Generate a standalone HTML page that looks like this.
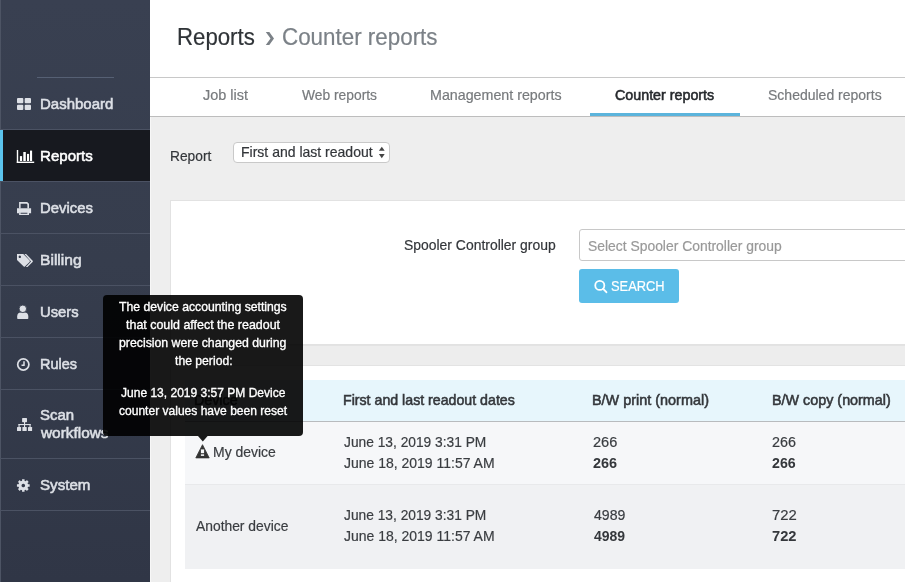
<!DOCTYPE html>
<html><head><meta charset="utf-8">
<style>
*{box-sizing:border-box;margin:0;padding:0}
html,body{width:905px;height:582px;overflow:hidden;background:#eeeeee;font-family:"Liberation Sans",sans-serif;}
#wrap{position:absolute;left:0;top:0;width:905px;height:582px;background:#eeeeee;will-change:transform;overflow:hidden}
.tx{position:absolute;white-space:nowrap;line-height:1;transform-origin:0 0}
.bx{position:absolute}
#side{position:absolute;left:0;top:0;width:150px;height:582px;background:linear-gradient(#394051,#363d4d 45%,#303646);}
.sep{position:absolute;left:0;width:150px;height:1px;background:#4b5263}
.active{position:absolute;left:0;top:130px;width:150px;height:51px;background:#17191f}
.activebar{position:absolute;left:0;top:130px;width:3px;height:51px;background:#5bc3ec}
.ico{position:absolute}
</style></head><body><div id="wrap">
<div id="side"></div>
<div class="bx" style="left:0;top:0;width:1px;height:582px;background:#4d5464"></div>
<div class="bx" style="left:37px;top:77px;width:77px;height:1px;background:#566074"></div>
<div class="active"></div>
<div class="activebar"></div>
<div class="sep" style="top:129px"></div>
<div class="sep" style="top:181px"></div>
<div class="sep" style="top:233px"></div>
<div class="sep" style="top:285px"></div>
<div class="sep" style="top:337px"></div>
<div class="sep" style="top:389px"></div>
<div class="sep" style="top:458px"></div>
<div class="sep" style="top:510px"></div>

<!-- sidebar icons -->
<svg class="ico" style="left:0;top:0" width="40" height="582" viewBox="0 0 40 582">
 <g fill="#dde0e6">
  <rect x="17" y="98" width="6.3" height="5.2" rx="1"/><rect x="24.7" y="98" width="6.3" height="5.2" rx="1"/>
  <rect x="17" y="104.8" width="6.3" height="5.2" rx="1"/><rect x="24.7" y="104.8" width="6.3" height="5.2" rx="1"/>
 </g>
 <g fill="#ffffff">
  <rect x="16.8" y="150" width="1.4" height="13"/><rect x="16.8" y="161.6" width="17.4" height="1.4"/>
  <rect x="19.9" y="156.1" width="2.2" height="4.9"/><rect x="23.3" y="152" width="2.5" height="9"/>
  <rect x="27" y="153.9" width="2.1" height="7.1"/><rect x="30" y="150.6" width="2.1" height="10.4"/>
 </g>
 <g fill="#dde0e6">
  <path d="M19.1,202 H27.2 L29,203.8 V208.4 H27.4 V204.6 L26.6,203.7 H20.6 V208.4 H19.1 Z"/>
  <path d="M17,208.3 H31.1 V213.2 H29 V212 H19.1 V213.2 H17 Z"/>
  <path d="M19.1,212 H29 V215 H19.1 Z M20.6,212.7 V213.8 H27.4 V212.7 Z" fill-rule="evenodd"/>
 </g>
 <g fill="#dde0e6">
  <path d="M17,254.1 H23.3 L29.7,260.6 Q30.2,261.3 29.6,262 L24.9,266.6 Q24.3,267.1 23.7,266.5 L17,259.9 Z M19.8,255.6 A1.2,1.2 0 1 0 19.81,255.6 Z" fill-rule="evenodd"/>
  <path d="M24.4,254.1 H26.1 L32.7,260.7 Q33.2,261.3 32.6,261.9 L27.5,267 H25.8 L31,261.6 Z"/>
 </g>
 <g fill="#dde0e6">
  <path d="M17.2,318.3 Q17.2,319 17.9,319 H27.6 Q28.3,319 28.3,318.3 V316.2 Q28.3,312.4 24.6,312.4 H20.9 Q17.2,312.4 17.2,316.2 Z"/>
  <circle cx="22.8" cy="308.8" r="3.75" stroke="#363d4d" stroke-width="0.9"/>
 </g>
 <g fill="none" stroke="#dde0e6">
  <circle cx="23.3" cy="364.5" r="5.6" stroke-width="1.7"/>
  <path d="M24,361.3 V365.2 H21.5" stroke-width="1.5"/>
 </g>
 <g fill="#dde0e6">
  <rect x="22.1" y="418.1" width="4.9" height="4.1" rx="0.6"/>
  <rect x="24" y="422" width="1.1" height="5"/>
  <rect x="18.5" y="424" width="12.1" height="1.1"/>
  <rect x="18.5" y="424" width="1.1" height="3"/><rect x="29.5" y="424" width="1.1" height="3"/>
  <rect x="17" y="427" width="4.1" height="4" rx="0.5"/><rect x="22.4" y="427" width="4.3" height="4" rx="0.5"/><rect x="28" y="427" width="4.1" height="4" rx="0.5"/>
 </g>
 <g fill="#dde0e6">
  <path fill-rule="evenodd" d="M29.67,484.21 L29.67,486.79 L28.06,486.68 L27.50,488.03 L28.72,489.09 L26.89,490.92 L25.83,489.70 L24.48,490.26 L24.59,491.87 L22.01,491.87 L22.12,490.26 L20.77,489.70 L19.71,490.92 L17.88,489.09 L19.10,488.03 L18.54,486.68 L16.93,486.79 L16.93,484.21 L18.54,484.32 L19.10,482.97 L17.88,481.91 L19.71,480.08 L20.77,481.30 L22.12,480.74 L22.01,479.13 L24.59,479.13 L24.48,480.74 L25.83,481.30 L26.89,480.08 L28.72,481.91 L27.50,482.97 L28.06,484.32 Z M25.10,485.50 A1.80,1.80 0 1 0 25.10,485.51 Z"/>
 </g>
</svg>

<!-- header -->
<div class="bx" style="left:150px;top:0;width:755px;height:117px;background:#fff"></div>
<div class="bx" style="left:150px;top:77px;width:755px;height:1px;background:#c8c8c8"></div>
<div class="bx" style="left:150px;top:116px;width:755px;height:1px;background:#bdbdbd"></div>
<div class="bx" style="left:150px;top:117px;width:1px;height:465px;background:#f7f7f7"></div>
<div class="bx" style="left:590px;top:113px;width:150px;height:3px;background:#5bb4dc"></div>
<svg class="ico" style="left:265px;top:32px" width="10" height="14" viewBox="0 0 10 14"><polygon points="0.8,0 4.3,0 9,6.45 4.3,12.9 0.8,12.9 5.5,6.45" fill="#7b8187"/></svg>

<!-- report select -->
<div class="bx" style="left:233px;top:142px;width:157px;height:21px;background:#fff;border:1px solid #c9c9c9;border-radius:4px"></div>
<svg class="ico" style="left:377px;top:145px" width="10" height="15" viewBox="0 0 10 15"><polygon points="1.9,5.7 4.8,1.7 7.7,5.7" fill="#444"/><polygon points="1.9,8.9 4.8,13.2 7.7,8.9" fill="#444"/></svg>

<!-- card 1 -->
<div class="bx" style="left:170px;top:200px;width:760px;height:145px;background:#fff;border:1px solid #e2e2e2"></div>
<div class="bx" style="left:579px;top:229px;width:360px;height:32px;background:#fff;border:1px solid #c8c8c8;border-radius:3px"></div>
<div class="bx" style="left:579px;top:269px;width:100px;height:34px;background:#5bbde8;border-radius:3px"></div>
<svg class="ico" style="left:590px;top:275px" width="22" height="22" viewBox="0 0 22 22"><circle cx="9.8" cy="10.4" r="4.55" fill="none" stroke="#fff" stroke-width="1.8"/><path d="M13.2,13.8 L16.4,17.2" stroke="#fff" stroke-width="1.9" stroke-linecap="round"/></svg>

<!-- band + card 2 -->
<div class="bx" style="left:170px;top:345px;width:760px;height:21px;background:#ededed;border-top:1px solid #e3e3e3;border-bottom:1px solid #e3e3e3"></div>
<div class="bx" style="left:170px;top:366px;width:760px;height:240px;background:#fff;border-left:1px solid #e2e2e2"></div>
<div class="bx" style="left:185px;top:380px;width:720px;height:41px;background:#e7f6fc"></div>
<div class="bx" style="left:185px;top:421px;width:720px;height:1px;background:#b8bbbe"></div>
<div class="bx" style="left:185px;top:422px;width:720px;height:62px;background:#f6f7f9"></div>
<div class="bx" style="left:185px;top:484px;width:720px;height:85px;background:#f0f1f3;border-top:1px solid #e8e9eb"></div>
<svg class="ico" style="left:190px;top:440px" width="24" height="22" viewBox="0 0 24 22"><path d="M12.5,4.7 L19.2,17.9 H5.8 Z" fill="#333" stroke="#333" stroke-width="0.8" stroke-linejoin="round"/><rect x="10.9" y="9.4" width="3.2" height="3.8" fill="#f6f7f9"/><rect x="10.9" y="14.3" width="3.2" height="1.6" fill="#f6f7f9"/></svg>

<div class="tx" id="t0" style="left:177.22px;top:25.82px;font-size:23.10px;color:#2f3337;-webkit-text-stroke:0.2px #2f3337;transform:scaleX(0.9617);">Reports</div>
<div class="tx" id="t1" style="left:281.78px;top:25.82px;font-size:23.10px;color:#7b8187;-webkit-text-stroke:0.2px #7b8187;transform:scaleX(0.9692);">Counter reports</div>
<div class="tx" id="t2" style="left:203.08px;top:88.00px;font-size:14.50px;color:#777a7d;-webkit-text-stroke:0.2px #777a7d;transform:scaleX(0.9977);">Job list</div>
<div class="tx" id="t3" style="left:302.43px;top:88.00px;font-size:14.50px;color:#777a7d;-webkit-text-stroke:0.2px #777a7d;transform:scaleX(0.9532);">Web reports</div>
<div class="tx" id="t4" style="left:430.36px;top:88.00px;font-size:14.50px;color:#777a7d;-webkit-text-stroke:0.2px #777a7d;transform:scaleX(0.9834);">Management reports</div>
<div class="tx" id="t5" style="left:615.29px;top:88.00px;font-size:14.50px;color:#26292d;-webkit-text-stroke:0.55px #26292d;transform:scaleX(0.9845);">Counter reports</div>
<div class="tx" id="t6" style="left:767.87px;top:88.00px;font-size:14.50px;color:#777a7d;-webkit-text-stroke:0.2px #777a7d;transform:scaleX(0.9656);">Scheduled reports</div>
<div class="tx" id="t7" style="left:39.60px;top:96.00px;font-size:15.20px;color:#dde0e6;-webkit-text-stroke:0.55px #dde0e6;transform:scaleX(0.9872);">Dashboard</div>
<div class="tx" id="t8" style="left:39.59px;top:147.60px;font-size:15.20px;color:#ffffff;-webkit-text-stroke:0.55px #ffffff;transform:scaleX(0.9932);">Reports</div>
<div class="tx" id="t9" style="left:39.61px;top:199.81px;font-size:15.20px;color:#dde0e6;-webkit-text-stroke:0.55px #dde0e6;transform:scaleX(0.9792);">Devices</div>
<div class="tx" id="t10" style="left:39.55px;top:252.00px;font-size:15.20px;color:#dde0e6;-webkit-text-stroke:0.55px #dde0e6;transform:scaleX(1.0286);">Billing</div>
<div class="tx" id="t11" style="left:39.69px;top:304.00px;font-size:15.20px;color:#dde0e6;-webkit-text-stroke:0.55px #dde0e6;transform:scaleX(0.9737);">Users</div>
<div class="tx" id="t12" style="left:39.64px;top:356.00px;font-size:15.20px;color:#dde0e6;-webkit-text-stroke:0.55px #dde0e6;transform:scaleX(0.9518);">Rules</div>
<div class="tx" id="t13" style="left:39.83px;top:407.00px;font-size:15.20px;color:#dde0e6;-webkit-text-stroke:0.55px #dde0e6;transform:scaleX(0.9853);">Scan</div>
<div class="tx" id="t14" style="left:40.50px;top:424.50px;font-size:15.20px;color:#dde0e6;-webkit-text-stroke:0.55px #dde0e6;transform:scaleX(1.0121);">workflows</div>
<div class="tx" id="t15" style="left:39.82px;top:476.81px;font-size:15.20px;color:#dde0e6;-webkit-text-stroke:0.55px #dde0e6;transform:scaleX(0.9955);">System</div>
<div class="tx" id="t16" style="left:169.80px;top:149.00px;font-size:14.50px;color:#33363a;-webkit-text-stroke:0.2px #33363a;transform:scaleX(0.9487);">Report</div>
<div class="tx" id="t17" style="left:241.48px;top:145.00px;font-size:14.50px;color:#33363a;-webkit-text-stroke:0.2px #33363a;transform:scaleX(0.9665);">First and last readout</div>
<div class="tx" id="t18" style="left:404.37px;top:237.60px;font-size:14.50px;color:#33363a;-webkit-text-stroke:0.2px #33363a;transform:scaleX(0.9602);">Spooler Controller group</div>
<div class="tx" id="t19" style="left:588.38px;top:239.00px;font-size:14.50px;color:#999999;-webkit-text-stroke:0.2px #999999;transform:scaleX(0.9575);">Select Spooler Controller group</div>
<div class="tx" id="t20" style="left:610.82px;top:279.00px;font-size:14.00px;color:#ffffff;-webkit-text-stroke:0.2px #ffffff;transform:scaleX(0.9194);">SEARCH</div>
<div class="tx" id="t21" style="left:194.06px;top:392.81px;font-size:14.50px;color:#34373b;-webkit-text-stroke:0.55px #34373b;transform:scaleX(0.9839);">Device</div>
<div class="tx" id="t22" style="left:342.87px;top:392.81px;font-size:14.50px;color:#34373b;-webkit-text-stroke:0.55px #34373b;transform:scaleX(0.9778);">First and last readout dates</div>
<div class="tx" id="t23" style="left:592.45px;top:392.81px;font-size:14.50px;color:#34373b;-webkit-text-stroke:0.55px #34373b;transform:scaleX(0.9942);">B/W print (normal)</div>
<div class="tx" id="t24" style="left:771.65px;top:392.81px;font-size:14.50px;color:#34373b;-webkit-text-stroke:0.55px #34373b;transform:scaleX(0.9893);">B/W copy (normal)</div>
<div class="tx" id="t25" style="left:212.78px;top:445.00px;font-size:14.50px;color:#3a3d41;-webkit-text-stroke:0.2px #3a3d41;transform:scaleX(0.9632);">My device</div>
<div class="tx" id="t26" style="left:343.79px;top:435.00px;font-size:14.50px;color:#3a3d41;-webkit-text-stroke:0.2px #3a3d41;transform:scaleX(0.9492);">June 13, 2019 3:31 PM</div>
<div class="tx" id="t27" style="left:343.79px;top:455.60px;font-size:14.50px;color:#3a3d41;-webkit-text-stroke:0.2px #3a3d41;transform:scaleX(0.9644);">June 18, 2019 11:57 AM</div>
<div class="tx" id="t28" style="left:592.87px;top:435.00px;font-size:14.50px;color:#3a3d41;-webkit-text-stroke:0.2px #3a3d41;transform:scaleX(1.0071);">266</div>
<div class="tx" id="t29" style="left:593.10px;top:455.60px;font-size:14.50px;color:#34373b;font-weight:bold;transform:scaleX(0.9945);">266</div>
<div class="tx" id="t30" style="left:772.08px;top:435.00px;font-size:14.50px;color:#3a3d41;-webkit-text-stroke:0.2px #3a3d41;transform:scaleX(0.9896);">266</div>
<div class="tx" id="t31" style="left:772.30px;top:455.60px;font-size:14.50px;color:#34373b;font-weight:bold;transform:scaleX(0.9772);">266</div>
<div class="tx" id="t32" style="left:196.20px;top:519.00px;font-size:14.50px;color:#3a3d41;-webkit-text-stroke:0.2px #3a3d41;transform:scaleX(0.9546);">Another device</div>
<div class="tx" id="t33" style="left:343.79px;top:508.00px;font-size:14.50px;color:#3a3d41;-webkit-text-stroke:0.2px #3a3d41;transform:scaleX(0.9492);">June 13, 2019 3:31 PM</div>
<div class="tx" id="t34" style="left:343.79px;top:528.60px;font-size:14.50px;color:#3a3d41;-webkit-text-stroke:0.2px #3a3d41;transform:scaleX(0.9644);">June 18, 2019 11:57 AM</div>
<div class="tx" id="t35" style="left:593.52px;top:508.00px;font-size:14.50px;color:#3a3d41;-webkit-text-stroke:0.2px #3a3d41;transform:scaleX(0.9706);">4989</div>
<div class="tx" id="t36" style="left:593.59px;top:528.60px;font-size:14.50px;color:#34373b;font-weight:bold;transform:scaleX(0.9639);">4989</div>
<div class="tx" id="t37" style="left:771.86px;top:508.00px;font-size:14.50px;color:#3a3d41;-webkit-text-stroke:0.2px #3a3d41;transform:scaleX(1.0268);">722</div>
<div class="tx" id="t38" style="left:772.01px;top:528.60px;font-size:14.50px;color:#34373b;font-weight:bold;transform:scaleX(1.0138);">722</div>

<!-- tooltip -->
<div class="bx" style="left:103px;top:295px;width:200px;height:141px;background:rgba(0,0,0,0.9);border-radius:4px"></div>
<svg class="ico" style="left:193px;top:436px" width="20" height="6" viewBox="0 0 20 6"><polygon points="5,0 14.6,0 9.8,5.4" fill="rgba(0,0,0,0.9)"/></svg>
<div class="tx" id="t100" style="left:119.46px;top:301.00px;font-size:12.80px;color:#ffffff;-webkit-text-stroke:0.35px #ffffff;transform:scaleX(0.9546);">The device accounting settings</div>
<div class="tx" id="t101" style="left:125.81px;top:318.81px;font-size:12.80px;color:#ffffff;-webkit-text-stroke:0.35px #ffffff;transform:scaleX(0.9725);">that could affect the readout</div>
<div class="tx" id="t102" style="left:118.90px;top:336.60px;font-size:12.80px;color:#ffffff;-webkit-text-stroke:0.35px #ffffff;transform:scaleX(0.9608);">precision were changed during</div>
<div class="tx" id="t103" style="left:174.52px;top:354.60px;font-size:12.80px;color:#ffffff;-webkit-text-stroke:0.35px #ffffff;transform:scaleX(0.9520);">the period:</div>
<div class="tx" id="t104" style="left:121.12px;top:387.10px;font-size:12.80px;color:#ffffff;-webkit-text-stroke:0.35px #ffffff;transform:scaleX(0.9393);">June 13, 2019 3:57 PM Device</div>
<div class="tx" id="t105" style="left:118.82px;top:404.81px;font-size:12.80px;color:#ffffff;-webkit-text-stroke:0.35px #ffffff;transform:scaleX(0.9411);">counter values have been reset</div>

</div></body></html>
